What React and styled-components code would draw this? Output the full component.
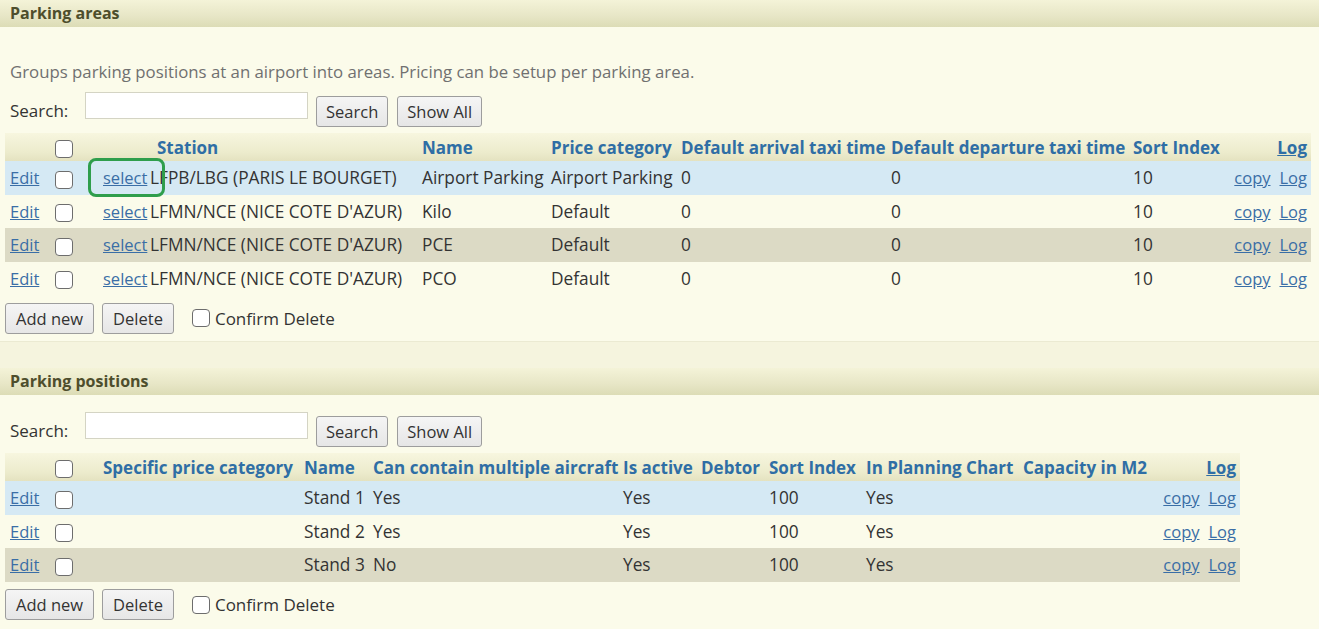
import React from "react";
import styled, { createGlobalStyle, css } from "styled-components";

const GlobalStyle = createGlobalStyle`
  html, body {
    margin: 0;
    padding: 0;
    background: #fbfbea;
  }
  body {
    font-family: "Open Sans", "Noto Sans", Arial, sans-serif;
    font-size: 17px;
    color: #333;
  }
`;

const areaRows = [
  { station: "LFPB/LBG (PARIS LE BOURGET)", name: "Airport Parking", price: "Airport Parking", arrival: "0", departure: "0", sort: "10" },
  { station: "LFMN/NCE (NICE COTE D'AZUR)", name: "Kilo", price: "Default", arrival: "0", departure: "0", sort: "10" },
  { station: "LFMN/NCE (NICE COTE D'AZUR)", name: "PCE", price: "Default", arrival: "0", departure: "0", sort: "10" },
  { station: "LFMN/NCE (NICE COTE D'AZUR)", name: "PCO", price: "Default", arrival: "0", departure: "0", sort: "10" },
];

const positionRows = [
  { name: "Stand 1", multiple: "Yes", active: "Yes", sort: "100", planning: "Yes" },
  { name: "Stand 2", multiple: "Yes", active: "Yes", sort: "100", planning: "Yes" },
  { name: "Stand 3", multiple: "No", active: "Yes", sort: "100", planning: "Yes" },
];

const areaCols = [45, 48, 49, 270, 129, 130, 210, 242, 92, 91];
const positionCols = [45, 48, 201, 69, 250, 78, 68, 97, 157, 132, 90];

const rowKind = (i) => (i === 0 ? "selected" : i % 2 === 0 ? "alt" : "plain");

const SearchBar = ({ top }) => (
  <SearchRow $top={top}>
    <SearchLabel>Search:</SearchLabel>
    <SearchInput type="text" />
    <Button $raised>Search</Button>
    <Button $raised>Show All</Button>
  </SearchRow>
);

const Actions = () => (
  <ActionRow>
    <Button>Add new</Button>
    <Button>Delete</Button>
    <ConfirmLabel>
      <Check />
      Confirm Delete
    </ConfirmLabel>
  </ActionRow>
);

export default function App() {
  return (
    <Page>
      <GlobalStyle />

      <SectionTitle>Parking areas</SectionTitle>
      <Description>
        Groups parking positions at an airport into areas. Pricing can be setup per parking area.
      </Description>
      <SearchBar top={0} />

      <Table $width={1306}>
        <colgroup>
          {areaCols.map((w, i) => (
            <col key={i} style={{ width: w }} />
          ))}
        </colgroup>
        <thead>
          <HeadRow>
            <Th />
            <Th><Check /></Th>
            <Th />
            <Th $indent={5}>Station</Th>
            <Th>Name</Th>
            <Th>Price category</Th>
            <Th>Default arrival taxi time</Th>
            <Th>Default departure taxi time</Th>
            <Th>Sort Index</Th>
            <Th $right><HeadLink>Log</HeadLink></Th>
          </HeadRow>
        </thead>
        <tbody>
          {areaRows.map((r, i) => (
            <Row key={i} $kind={rowKind(i)}>
              <Td><Link>Edit</Link></Td>
              <Td><Check /></Td>
              <Td>
                <SelectLink $marked={i === 0}>select</SelectLink>
              </Td>
              <Td $tight>{r.station}</Td>
              <Td>{r.name}</Td>
              <Td>{r.price}</Td>
              <Td>{r.arrival}</Td>
              <Td>{r.departure}</Td>
              <Td>{r.sort}</Td>
              <Td $right>
                <RowLinks>
                  <Link>copy</Link>
                  <Link>Log</Link>
                </RowLinks>
              </Td>
            </Row>
          ))}
        </tbody>
      </Table>
      <Actions />

      <Spacer />

      <SectionTitle>Parking positions</SectionTitle>
      <SearchBar top={17} />

      <Table $width={1235}>
        <colgroup>
          {positionCols.map((w, i) => (
            <col key={i} style={{ width: w }} />
          ))}
        </colgroup>
        <thead>
          <HeadRow>
            <Th />
            <Th><Check /></Th>
            <Th>Specific price category</Th>
            <Th>Name</Th>
            <Th>Can contain multiple aircraft</Th>
            <Th>Is active</Th>
            <Th>Debtor</Th>
            <Th>Sort Index</Th>
            <Th>In Planning Chart</Th>
            <Th>Capacity in M2</Th>
            <Th $right><HeadLink>Log</HeadLink></Th>
          </HeadRow>
        </thead>
        <tbody>
          {positionRows.map((r, i) => (
            <Row key={i} $kind={rowKind(i)}>
              <Td><Link>Edit</Link></Td>
              <Td><Check /></Td>
              <Td />
              <Td>{r.name}</Td>
              <Td>{r.multiple}</Td>
              <Td>{r.active}</Td>
              <Td />
              <Td>{r.sort}</Td>
              <Td>{r.planning}</Td>
              <Td />
              <Td $right>
                <RowLinks>
                  <Link>copy</Link>
                  <Link>Log</Link>
                </RowLinks>
              </Td>
            </Row>
          ))}
        </tbody>
      </Table>
      <Actions />
    </Page>
  );
}

const Page = styled.div`
  min-height: 629px;
  background: #fbfbea;
`;

const SectionTitle = styled.div`
  height: 27px;
  line-height: 27px;
  padding-left: 10px;
  font-weight: 700;
  font-size: 16px;
  color: #4e4e2c;
  background: linear-gradient(to bottom, #f4f3d8 0%, #e7e6c6 60%, #dcdcb6 100%);
`;

const Description = styled.p`
  margin: 0;
  padding: 33px 0 0 10px;
  height: 32px;
  line-height: 24px;
  color: #707070;
  font-size: 16.8px;
`;

const SearchRow = styled.div`
  display: flex;
  align-items: flex-start;
  height: ${(p) => 41 + p.$top}px;
  padding-left: 10px;
  padding-top: ${(p) => p.$top}px;
  box-sizing: border-box;
`;

const SearchLabel = styled.span`
  width: 75px;
  line-height: 30px;
  margin-top: 4px;
  color: #333;
`;

const SearchInput = styled.input`
  width: 223px;
  height: 27px;
  box-sizing: border-box;
  border: 1px solid #d4d4c4;
  background: #fff;
  margin: 0 8px 0 0;
  padding: 2px 4px;
  outline: none;
`;

const Button = styled.button`
  height: 31px;
  margin: ${(p) => (p.$raised ? "4px 9px 0 0" : "0 8px 0 0")};
  padding: 0 ${(p) => (p.$raised ? 9 : 10)}px;
  border: 1px solid #9d9d9d;
  border-radius: 3px;
  background: linear-gradient(to bottom, #f5f5f5, #e6e6e6);
  font-family: inherit;
  font-size: 16.5px;
  color: #333;
`;

const Table = styled.table`
  table-layout: fixed;
  width: ${(p) => p.$width}px;
  margin-left: 5px;
  border-collapse: collapse;
  white-space: nowrap;
`;

const HeadRow = styled.tr`
  background: linear-gradient(to bottom, #f7f6df 0%, #ecebcc 70%, #e4e2c0 100%);
`;

const Th = styled.th`
  height: 28px;
  box-sizing: border-box;
  text-align: ${(p) => (p.$right ? "right" : "left")};
  padding: 0 4px 0 ${(p) => 5 + (p.$indent || 0)}px;
  font-weight: 700;
  color: #2f6ea5;
  overflow: visible;
`;

const rowColors = {
  selected: "#d5e9f4",
  plain: "#fbfbea",
  alt: "#dcdac5",
};

const Row = styled.tr`
  background: ${(p) => rowColors[p.$kind]};
`;

const Td = styled.td`
  height: 33.5px;
  box-sizing: border-box;
  text-align: ${(p) => (p.$right ? "right" : "left")};
  padding: 0 ${(p) => (p.$right ? 4 : 2)}px 0 ${(p) => (p.$tight ? 3 : 5)}px;
  font-size: 17.3px;
  color: #333;
  overflow: visible;
`;

const Link = styled.a`
  color: #3a6ea6;
  font-size: 16.5px;
  text-decoration: underline;
  cursor: pointer;
`;

const HeadLink = styled(Link)`
  color: #2f6ea5;
  font-size: 17px;
`;

const SelectLink = styled(Link)`
  position: relative;
  ${(p) =>
    p.$marked &&
    css`
      &::after {
        content: "";
        position: absolute;
        left: -15px;
        right: -18px;
        top: -8px;
        bottom: -8px;
        border: 3px solid #2f9e4c;
        border-radius: 8px;
        pointer-events: none;
      }
    `}
`;

const RowLinks = styled.span`
  display: inline-flex;
  gap: 9px;
`;

const Check = styled.input.attrs({ type: "checkbox" })`
  appearance: none;
  width: 18px;
  height: 18px;
  margin: 0;
  vertical-align: middle;
  border: 1px solid #6d6d6d;
  border-radius: 4px;
  background: #fff;
`;

const ActionRow = styled.div`
  display: flex;
  align-items: center;
  height: 46px;
  padding-left: 5px;
  box-sizing: border-box;
`;

const ConfirmLabel = styled.label`
  display: inline-flex;
  align-items: center;
  gap: 5px;
  margin-left: 10px;
  color: #333;
`;

const Spacer = styled.div`
  height: 26px;
  border-top: 1px solid #ebead2;
  background: #f5f4de;
`;
